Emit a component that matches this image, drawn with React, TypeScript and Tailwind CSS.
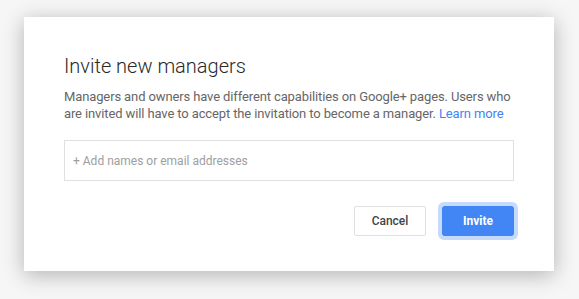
import React from "react";

export default function App() {
  return (
    <div
      className="w-[579px] h-[299px] bg-[#f6f6f6] pt-[17px] pl-[24px] overflow-hidden"
      style={{ fontFamily: "Roboto, 'Liberation Sans', sans-serif" }}
    >
      <div className="w-[530px] h-[254px] bg-white shadow-[0_4px_20px_rgba(0,0,0,0.28)] pt-[36px] pl-[40px] pr-[26px]">
        <h1 className="text-[20px] leading-[26px] font-light text-[#2a2a2a]">Invite new managers</h1>
        <p className="mt-[9px] text-[13px] tracking-[-0.12px] leading-[17px] text-[#666666]">
          Managers and owners have different capabilities on Google+ pages. Users who are invited will have to accept the invitation to become a manager.{" "}
          <a className="text-[#4285f4]" href="#">Learn more</a>
        </p>
        <div className="mt-[18px] w-[450px] h-[41px] border border-[#e0e0e0] flex items-center pl-[8px] text-[12px] text-[#9e9e9e]">
          + Add names or email addresses
        </div>
        <div className="mt-[25px] flex justify-end gap-[16px] w-[450px]">
          <button className="w-[72px] h-[30px] border border-[#e0e0e0] rounded-[2px] bg-white text-[12px] font-medium text-[#444]">
            Cancel
          </button>
          <button className="w-[72px] h-[30px] rounded-[2px] bg-[#4285f4] text-[12px] font-bold text-white outline outline-4 outline-[#c6dafc]">
            Invite
          </button>
        </div>
      </div>
    </div>
  );
}
